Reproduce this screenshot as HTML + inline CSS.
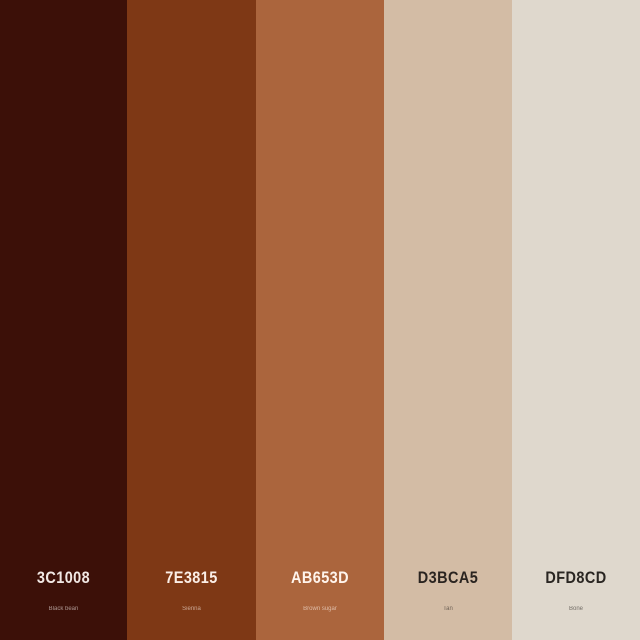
<!DOCTYPE html>
<html><head><style>
html,body{margin:0;padding:0;width:640px;height:640px;overflow:hidden;font-family:"Liberation Sans",sans-serif}
.c{position:absolute;top:0;height:640px}
.h{position:absolute;top:568px;width:100%;text-align:center;font-size:17px;font-weight:bold;transform:scaleX(0.85);letter-spacing:0.5px}
.n{position:absolute;top:606px;width:100%;text-align:center;font-size:6px;opacity:.6}
</style></head><body>
<div class="c" style="left:0;width:127px;background:#3C1008;color:#f2e8e4"><div class="h">3C1008</div><div class="n">Black bean</div></div>
<div class="c" style="left:127px;width:129px;background:#7E3815;color:#fbeee6"><div class="h">7E3815</div><div class="n">Sienna</div></div>
<div class="c" style="left:256px;width:128px;background:#AB653D;color:#fff4ec"><div class="h">AB653D</div><div class="n">Brown sugar</div></div>
<div class="c" style="left:384px;width:128px;background:#D3BCA5;color:#2a2420"><div class="h">D3BCA5</div><div class="n">Tan</div></div>
<div class="c" style="left:512px;width:128px;background:#DFD8CD;color:#2a2622"><div class="h">DFD8CD</div><div class="n">Bone</div></div>
</body></html>
